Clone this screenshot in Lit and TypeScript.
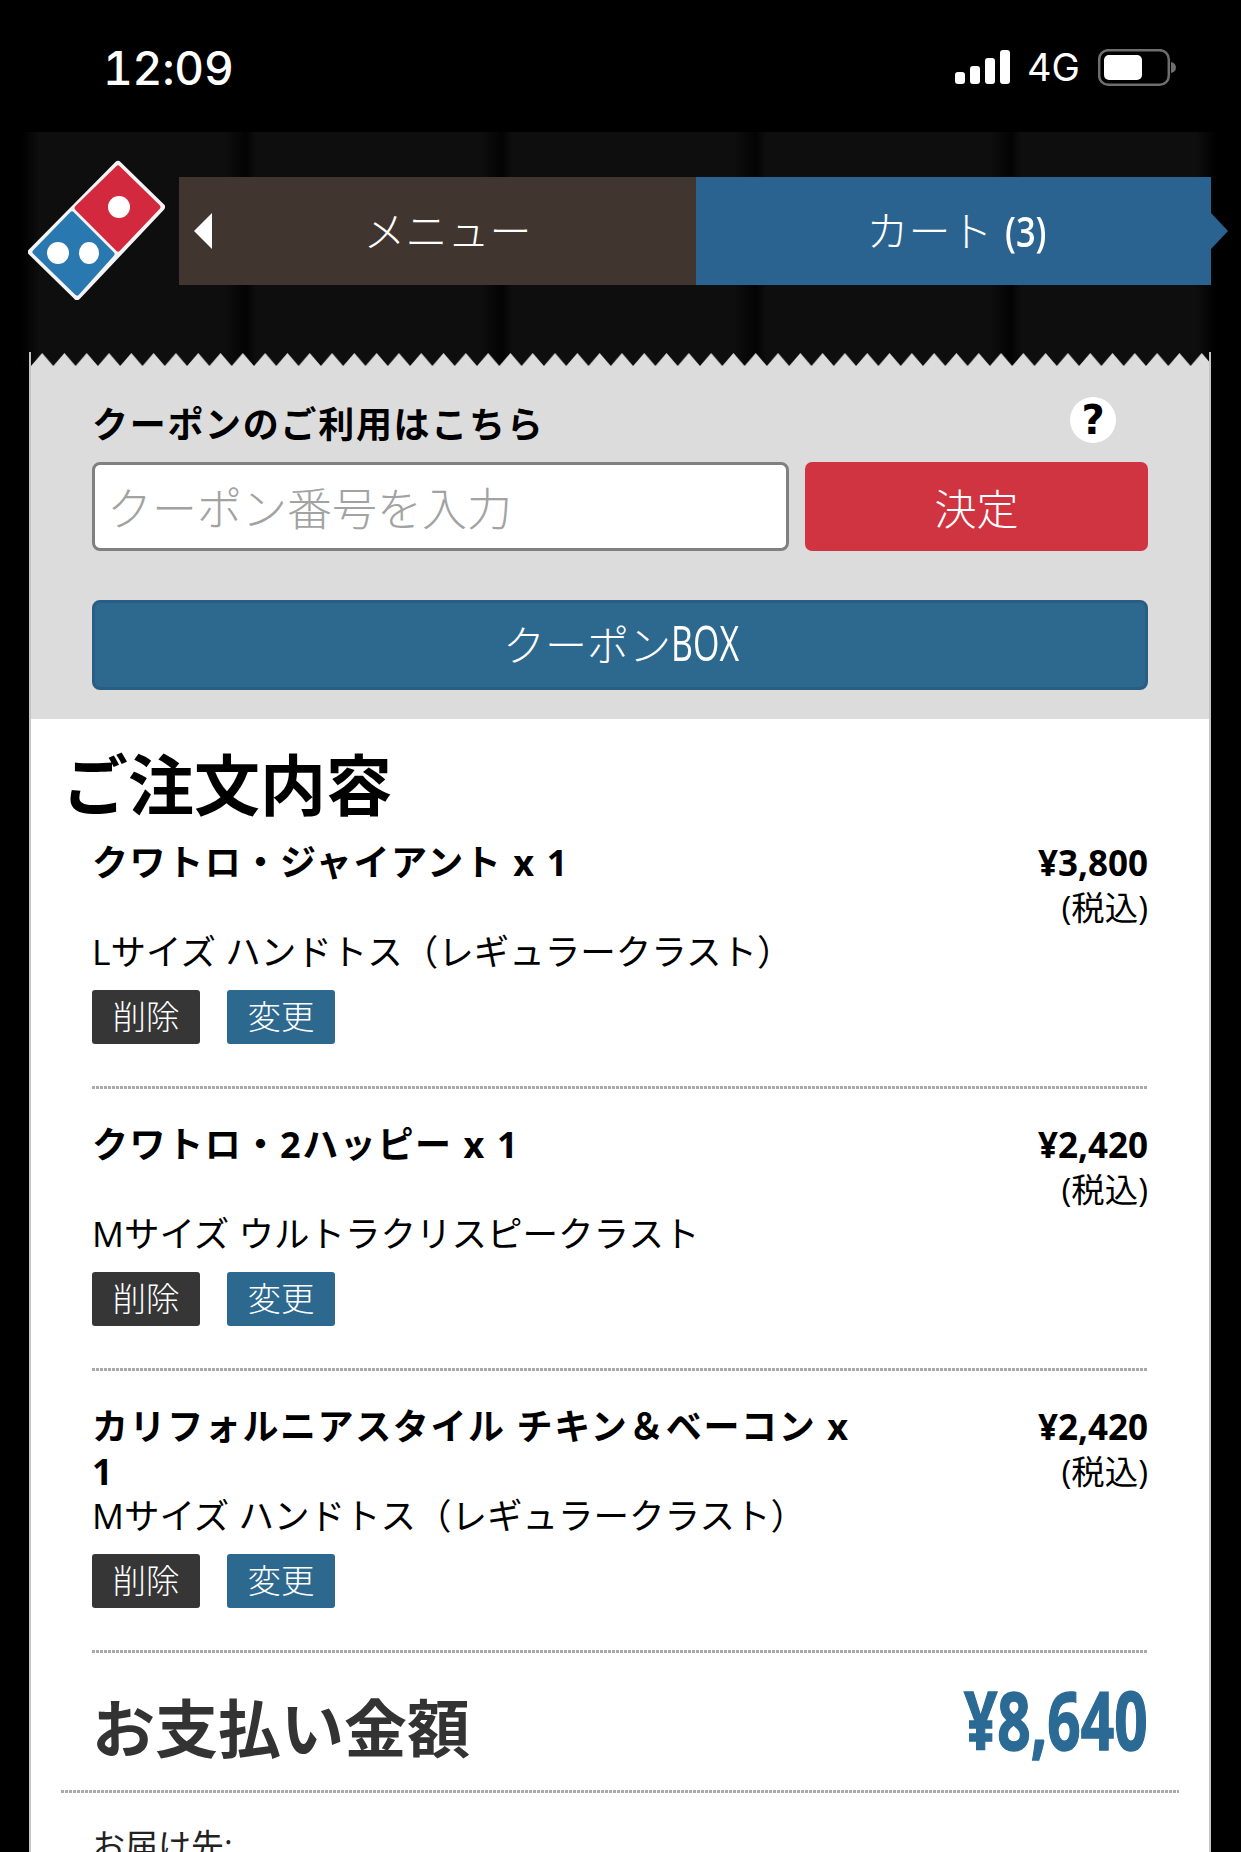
import { LitElement, html, css } from "lit";
import { customElement } from "lit/decorators.js";

const ITEMS = [
  { name: "クワトロ・ジャイアント x 1", price: "¥3,800", desc: "Lサイズ ハンドトス（レギュラークラスト）" },
  { name: "クワトロ・2ハッピー x 1", price: "¥2,420", desc: "Mサイズ ウルトラクリスピークラスト" },
  { name: "カリフォルニアスタイル チキン＆ベーコン x 1", price: "¥2,420", desc: "Mサイズ ハンドトス（レギュラークラスト）" },
];

@customElement("app-root")
export class AppRoot extends LitElement {
  static styles = css`
    :host {
      display: block;
      height: 1852px;
      overflow: hidden;
      background: #000;
      font-family: "Open Sans", "Noto Sans CJK JP", sans-serif;
      color: #000;
    }
    * { box-sizing: border-box; }

    .status {
      height: 132px;
      display: flex;
      align-items: flex-start;
      justify-content: space-between;
      color: #fff;
    }
    .time {
      margin: 40px 0 0 103px;
      font: 500 46px/56px Inter, "Liberation Sans", sans-serif;
      font-variant-numeric: tabular-nums;
      letter-spacing: -0.2px;
    }
    .status-icons { margin: 49px 64px 0 0; display: flex; align-items: flex-start; }
    .net {
      width: 71px;
      margin: -5px 0 0 16px;
      font: 400 38px/46px Inter, "Liberation Sans", sans-serif;
      white-space: nowrap;
    }

    .header {
      height: 234px;
      display: flex;
      flex-direction: column;
      background:
        linear-gradient(90deg, #000 0 22px, transparent 40px, transparent 1196px, #000 1216px),
        linear-gradient(90deg, transparent 225px, #030303 246px, transparent 256px),
        linear-gradient(90deg, transparent 480px, #030303 502px, transparent 512px),
        linear-gradient(90deg, transparent 735px, #030303 756px, transparent 766px),
        linear-gradient(90deg, transparent 990px, #030303 1011px, transparent 1021px),
        #0e0e0e;
    }
    .bar {
      flex: 1;
      display: flex;
      align-items: flex-start;
      padding: 28px 0 0 28px;
    }
    .logo { width: 137px; height: 140px; flex: none; margin-right: 14px; }
    .nav { display: flex; width: 1032px; height: 108px; margin-top: 17px; color: #fff; }
    .tab {
      position: relative;
      flex: 1;
      display: flex;
      align-items: center;
      justify-content: center;
      font-size: 42px;
      font-weight: 300;
      line-height: 108px;
      white-space: nowrap;
    }
    .tab.menu { background: #40362f; padding-left: 20px; flex: 0 0 517px; }
    .tab.cart { background: #2b6390; padding-left: 8px; }
    .tab.menu::before {
      content: "";
      position: absolute;
      left: 15px;
      top: 36px;
      border-style: solid;
      border-width: 18px 18px 18px 0;
      border-color: transparent #fff transparent transparent;
    }
    .tab.cart::after {
      content: "";
      position: absolute;
      right: -17px;
      top: 36px;
      border-style: solid;
      border-width: 18px 0 18px 17px;
      border-color: transparent transparent transparent #2b6390;
    }
    .cond {
      display: inline-block;
      white-space: nowrap;
      transform-origin: left center;
    }
    .count {
      width: 44px;
      margin-left: 12px;
      font-size: 42px;
      font-weight: 600;
      transform: scaleX(0.82);
    }
    .zigzag {
      display: block;
      width: 1182px;
      height: 14px;
      margin-left: 29px;
      border-left: 2px solid #c6c6c6;
      border-right: 2px solid #c6c6c6;
    }
    .zigzag rect { filter: blur(0.6px); }

    .sheet {
      margin: 0 30px 0 29px;
      border-left: 2px solid #c6c6c6;
      border-right: 2px solid #c6c6c6;
      background: #fff;
    }
    .coupon {
      height: 353px;
      padding: 31px 61px 0;
      background: #dcdcdc;
    }
    .coupon-head {
      height: 65px;
      display: flex;
      justify-content: space-between;
      align-items: flex-start;
    }
    .coupon-title {
      padding-top: 1px;
      font-size: 36px;
      font-weight: 700;
      line-height: 54px;
      letter-spacing: 1.7px;
    }
    .help {
      width: 46px;
      height: 46px;
      margin-right: 32px;
      border-radius: 50%;
      background: #fff;
      display: flex;
      align-items: center;
      justify-content: center;
      font: 700 40px/46px "DejaVu Sans", sans-serif;
    }
    .coupon-form { display: flex; height: 89px; gap: 16px; }
    .coupon-input {
      flex: 0 0 697px;
      height: 89px;
      padding: 0 12px;
      border: 3px solid #808080;
      border-radius: 8px;
      background: #fff;
      font: 300 45px "Noto Sans CJK JP", sans-serif;
      outline: none;
    }
    .coupon-input::placeholder { color: #a2a2a2; opacity: 1; }
    .btn {
      border: 0;
      font-family: inherit;
      color: #fff;
      display: flex;
      align-items: center;
      justify-content: center;
    }
    .btn-ok {
      flex: 1;
      border-radius: 7px;
      background: #d03441;
      font-size: 42px;
      font-weight: 300;
    }
    .btn-box {
      width: 100%;
      height: 90px;
      margin-top: 49px;
      padding-bottom: 6px;
      border: 3px solid #285e83;
      border-radius: 8px;
      background: #2d688f;
      font-size: 42px;
      font-weight: 300;
    }
    .box-latin {
      width: 66px;
      font-size: 50px;
      font-weight: 500;
      transform: scaleX(0.68);
    }

    .order { padding: 28px 61px 0; }
    .order h2 {
      margin: -3px 0 0 -30px;
      height: 96px;
      font-size: 66px;
      font-weight: 700;
      line-height: 80px;
    }
    .item { padding-bottom: 42px; }
    .item + .dots + .item { padding-top: 33px; }
    .item-top {
      height: 90px;
      display: flex;
      justify-content: space-between;
      align-items: flex-start;
    }
    .item-name {
      width: 770px;
      font-size: 36px;
      font-weight: 700;
      line-height: 45px;
      letter-spacing: 1.6px;
    }
    .item-price { text-align: right; }
    .price {
      font-size: 35px;
      font-weight: 700;
      line-height: 45px;
    }
    .tax { font-size: 33.4px; line-height: 45px; }
    .item-desc { height: 43px; font-size: 35.5px; line-height: 43px; white-space: nowrap; }
    .actions { display: flex; gap: 27px; margin-top: 17px; }
    .act {
      width: 108px;
      height: 54px;
      padding-bottom: 5px;
      border-radius: 3px;
      font-size: 33.5px;
      font-weight: 300;
    }
    .act.del { background: #363636; }
    .act.chg { background: #2d688f; }
    .dots {
      height: 3px;
      background: repeating-linear-gradient(90deg, #aaaaaa 0 3px, transparent 3px 4px);
    }

    .total-wrap { margin: 0 30px; }
    .total {
      height: 137px;
      margin: 0 31px;
      display: flex;
      justify-content: space-between;
      align-items: center;
      color: #333;
    }
    .total-label { padding-top: 12px; font-size: 63px; font-weight: 700; line-height: 80px; }
    .total-price {
      flex: none;
      font-size: 80px;
      font-weight: 700;
      line-height: 80px;
      color: #2b6a94;
      transform: scaleX(0.73);
      transform-origin: right center;
      margin-top: -5px;
      -webkit-text-stroke: 1.5px #2b6a94;
    }
    .overlap {
      margin: 0 31px -3px 32px;
      background: repeating-linear-gradient(90deg, #8c8c8c 0 3px, transparent 3px 4px);
    }
    .address {
      margin: 30px 0 0 31px;
      font-size: 33px;
      line-height: 45px;
      color: #222;
    }
  `;

  render() {
    return html`
      <div class="status">
        <div class="time">12:09</div>
        <div class="status-icons">
          <svg width="57" height="36" viewBox="0 0 57 36" aria-label="signal">
            <rect x="1" y="23" width="10" height="12" rx="3" fill="#fff"/>
            <rect x="16" y="17" width="10" height="18" rx="3" fill="#fff"/>
            <rect x="31" y="9" width="10" height="26" rx="3" fill="#fff"/>
            <rect x="46" y="1" width="10" height="34" rx="3" fill="#fff"/>
          </svg>
          <span class="net">4G</span>
          <svg width="79" height="38" viewBox="144 0 79 38" aria-label="battery">
            <rect x="145.2" y="1.2" width="69.6" height="34.6" rx="9" fill="none" stroke="#6e6e6e" stroke-width="2.5"/>
            <rect x="150" y="6" width="38" height="25" rx="5" fill="#fff"/>
            <path d="M217 13 a6 6 0 0 1 5 5.5 a6 6 0 0 1 -5 5.5z" fill="#6e6e6e"/>
          </svg>
        </div>
      </div>

      <div class="header">
        <div class="bar">
          <svg class="logo" viewBox="28 160 137 140" aria-label="Domino's">
            <path d="M118 165 L161 207 L77 296 L32 252 Z" fill="#f4f4f4" stroke="#f4f4f4" stroke-width="8" stroke-linejoin="round"/>
            <path d="M118 168 L158 207 L118 249 L77 208 Z" fill="#d3293f" stroke="#d3293f" stroke-width="5" stroke-linejoin="round"/>
            <path d="M72 214 L112 254 L77 293 L35 252 Z" fill="#2a78b0" stroke="#2a78b0" stroke-width="5" stroke-linejoin="round"/>
            <ellipse cx="119" cy="207" rx="11" ry="11" fill="#fff"/>
            <ellipse cx="58" cy="253" rx="11" ry="11" fill="#fff"/>
            <ellipse cx="89" cy="253" rx="10" ry="11" fill="#fff"/>
          </svg>
          <div class="nav">
            <div class="tab menu">メニュー</div>
            <div class="tab cart">カート<span class="cond count">(3)</span></div>
          </div>
        </div>
        <svg class="zigzag" aria-hidden="true">
          <defs>
            <pattern id="tooth" width="22.3" height="14" patternUnits="userSpaceOnUse">
              <path d="M0 14 L11.15 1 L22.3 14 Z" fill="#dcdcdc"/>
            </pattern>
          </defs>
          <rect width="100%" height="14" fill="url(#tooth)"/>
        </svg>
      </div>

      <div class="sheet">
        <section class="coupon">
          <div class="coupon-head">
            <div class="coupon-title">クーポンのご利用はこちら</div>
            <div class="help">?</div>
          </div>
          <div class="coupon-form">
            <input class="coupon-input" placeholder="クーポン番号を入力" />
            <div class="btn btn-ok">決定</div>
          </div>
          <div class="btn btn-box">クーポン<span class="cond box-latin">BOX</span></div>
        </section>

        <section class="order">
          <h2>ご注文内容</h2>
          ${ITEMS.map(
            (it) => html`
              <div class="item">
                <div class="item-top">
                  <div class="item-name">${it.name}</div>
                  <div class="item-price">
                    <div class="price">${it.price}</div>
                    <div class="tax">(税込)</div>
                  </div>
                </div>
                <div class="item-desc">${it.desc}</div>
                <div class="actions">
                  <div class="btn act del">削除</div>
                  <div class="btn act chg">変更</div>
                </div>
              </div>
              <div class="dots"></div>
            `
          )}
        </section>

        <section class="total-wrap">
          <div class="total">
            <div class="total-label">お支払い金額</div>
            <div class="total-price">¥8,640</div>
          </div>
          <div class="dots overlap"></div>
          <div class="dots"></div>
          <div class="address">お届け先:</div>
        </section>
      </div>
    `;
  }
}
